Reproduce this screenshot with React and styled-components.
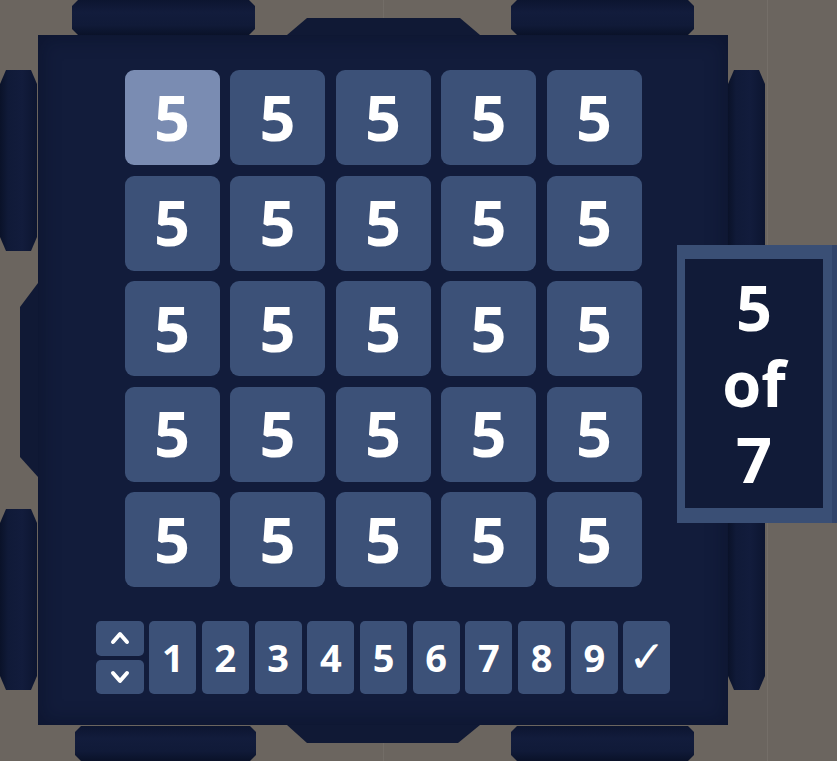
import React from "react";
import styled, { createGlobalStyle } from "styled-components";

const Global = createGlobalStyle`
  html, body { margin: 0; padding: 0; }
  body {
    background-color: #6b655f;
    background-image:
      linear-gradient(90deg, transparent 383px, rgba(255,255,255,0.05) 383px, rgba(255,255,255,0.05) 384px, transparent 384px),
      linear-gradient(90deg, transparent 767px, rgba(255,255,255,0.06) 767px, rgba(255,255,255,0.06) 768px, transparent 768px);
    font-family: "Open Sans", "Noto Sans", sans-serif;
    overflow: hidden;
  }
`;

const Stage = styled.div`
  position: relative;
  width: 837px;
  height: 761px;
  display: grid;
  grid-template-columns: 38px 690px 1fr;
  grid-template-rows: 35px 690px 1fr;
`;

const BumperRow = styled.div`
  grid-area: ${(p) => p.$area};
  display: flex;
  justify-content: space-between;
  align-items: ${(p) => (p.$bottom ? "flex-end" : "flex-start")};
  padding: 0 34px;
`;

const BumperCol = styled.div`
  grid-area: ${(p) => p.$area};
  display: flex;
  flex-direction: column;
  justify-content: space-between;
  padding: 35px 0;
`;

const Bumper = styled.div`
  background: ${(p) =>
    p.$vertical
      ? "linear-gradient(90deg, #0a1229 0%, #101a38 22%, #121c3c 60%, #0c1530 100%)"
      : "linear-gradient(180deg, #0c1530 0%, #121c3c 35%, #101a38 72%, #0a1229 100%)"};
  ${(p) =>
    p.$vertical
      ? `width: 37px; height: ${p.$len}px;`
      : `height: 35px; width: ${p.$len}px;`}
  ${(p) => (p.$shift ? `margin-left: ${p.$shift}px;` : "")}
  clip-path: ${(p) =>
    p.$vertical
      ? "polygon(6px 0, calc(100% - 6px) 0, 100% 14px, 100% calc(100% - 14px), calc(100% - 6px) 100%, 6px 100%, 0 calc(100% - 14px), 0 14px)"
      : "polygon(0 6px, 6px 0, calc(100% - 6px) 0, 100% 6px, 100% calc(100% - 6px), calc(100% - 6px) 100%, 6px 100%, 0 calc(100% - 6px))"};
`;

const Panel = styled.div`
  grid-area: 2 / 2;
  position: relative;
  background: #121c3b;
  box-shadow: inset 0 0 18px 4px rgba(6, 11, 28, 0.35);
  display: flex;
  flex-direction: column;
  align-items: center;
  padding-top: 35px;
  gap: 34px;
`;

const Tab = styled.div`
  position: absolute;
  background: #101935;
  ${(p) =>
    p.$side === "top" &&
    `left: 249px; top: -17px; width: 193px; height: 17px;
     clip-path: polygon(20px 0, calc(100% - 20px) 0, 100% 100%, 0 100%);`}
  ${(p) =>
    p.$side === "bottom" &&
    `left: 249px; bottom: -18px; width: 193px; height: 18px;
     clip-path: polygon(0 0, 100% 0, calc(100% - 22px) 100%, 20px 100%);`}
  ${(p) =>
    p.$side === "left" &&
    `left: -18px; top: 248px; width: 18px; height: 194px;
     clip-path: polygon(0 24px, 100% 0, 100% 100%, 0 calc(100% - 20px));`}
`;

const Board = styled.div`
  display: grid;
  grid-template-columns: repeat(5, 95px);
  grid-auto-rows: 95px;
  gap: 10.5px;
`;

const Cell = styled.div`
  border-radius: 9px;
  background: ${(p) => (p.$selected ? "#7a8cb2" : "#3c5178")};
  color: #ffffff;
  font-family: "Open Sans", "Noto Sans", sans-serif;
  font-weight: 700;
  font-size: 63px;
  line-height: 1;
  display: flex;
  align-items: center;
  justify-content: center;
  padding-bottom: 3px;
  box-sizing: border-box;
`;

const Keypad = styled.div`
  display: flex;
  gap: 5.7px;
  height: 73px;
`;

const ArrowStack = styled.div`
  display: flex;
  flex-direction: column;
  gap: 4px;
  width: 48px;
`;

const ArrowKey = styled.div`
  flex: 1;
  border-radius: 5px;
  background: #3c5178;
  display: flex;
  align-items: center;
  justify-content: center;
`;

const Key = styled.div`
  width: 47px;
  border-radius: 5px;
  background: #3c5178;
  color: #ffffff;
  font-family: ${(p) =>
    p.$symbol ? '"DejaVu Sans", sans-serif' : '"Open Sans", "Noto Sans", sans-serif'};
  font-weight: ${(p) => (p.$symbol ? 400 : 700)};
  font-size: ${(p) => (p.$symbol ? "44px" : "38px")};
  line-height: 1;
  display: flex;
  align-items: center;
  justify-content: center;
  padding-bottom: 2px;
  box-sizing: border-box;
`;

const Counter = styled.div`
  position: absolute;
  left: 677px;
  top: 245px;
  width: 160px;
  height: 278px;
  box-sizing: border-box;
  background: #111b38;
  border-style: solid;
  border-color: #3a4f75;
  border-width: 14px 14px 15px 8px;
  display: flex;
  align-items: center;
  justify-content: center;
  padding-bottom: 2px;
`;

const CounterText = styled.div`
  width: 90px;
  text-align: center;
  color: #ffffff;
  font-family: "Open Sans", "Noto Sans", sans-serif;
  font-weight: 700;
  font-size: 63px;
  line-height: 76px;
`;

const CounterEdge = styled.div`
  position: absolute;
  right: -14px;
  top: -14px;
  bottom: -15px;
  width: 5px;
  background: #31446a;
`;

const Caret = ({ down }) => (
  <svg width="20" height="14" viewBox="0 0 20 14">
    <polyline
      points={down ? "3,3 10,11 17,3" : "3,11 10,3 17,11"}
      fill="none"
      stroke="#fff"
      strokeWidth="4"
      strokeLinecap="round"
      strokeLinejoin="round"
    />
  </svg>
);

export default function App() {
  const cells = Array.from({ length: 25 }, (_, i) => i);
  const keys = ["1", "2", "3", "4", "5", "6", "7", "8", "9"];
  return (
    <>
      <Global />
      <Stage>
        <BumperRow $area="1 / 2">
          <Bumper $len={183} />
          <Bumper $len={183} />
        </BumperRow>
        <BumperCol $area="2 / 1">
          <Bumper $vertical $len={181} />
          <Bumper $vertical $len={181} />
        </BumperCol>
        <BumperCol $area="2 / 3">
          <Bumper $vertical $len={620} />
        </BumperCol>
        <BumperRow $area="3 / 2" $bottom>
          <Bumper $len={181} $shift={3} />
          <Bumper $len={183} />
        </BumperRow>
        <Panel>
          <Tab $side="top" />
          <Tab $side="left" />
          <Tab $side="bottom" />
          <Board>
            {cells.map((i) => (
              <Cell key={i} $selected={i === 0}>
                5
              </Cell>
            ))}
          </Board>
          <Keypad>
            <ArrowStack>
              <ArrowKey>
                <Caret />
              </ArrowKey>
              <ArrowKey>
                <Caret down />
              </ArrowKey>
            </ArrowStack>
            {keys.map((k) => (
              <Key key={k}>{k}</Key>
            ))}
            <Key $symbol>✓</Key>
          </Keypad>
        </Panel>
        <Counter>
          <CounterEdge />
          <CounterText>5 of 7</CounterText>
        </Counter>
      </Stage>
    </>
  );
}
